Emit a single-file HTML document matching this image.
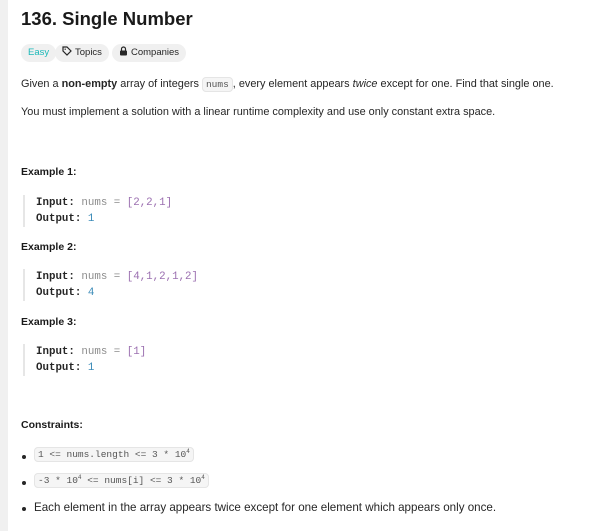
<!DOCTYPE html>
<html><head><style>
body{margin:0;width:614px;height:531px;background:#fff;font-family:"Liberation Sans",sans-serif;color:#262626;position:relative;overflow:hidden}
.strip{position:absolute;left:0;top:0;width:8px;height:531px;background:#f0f0f0}
.a{position:absolute;white-space:nowrap}
h1{position:absolute;left:21px;top:8px;margin:0;font-size:18.5px;font-weight:bold;color:#1a1a1a}
.badge{position:absolute;top:44px;height:18px;border-radius:9px;background:#f0f0f0;font-size:9.5px;line-height:18px;padding:0 7px;color:#262626}
p{margin:0}
.t{font-size:10.9px}
code{font-family:"Liberation Mono",monospace;font-size:9.5px;background:#f5f5f5;border:1px solid #e5e5e5;border-radius:4px;padding:1px 3px;color:#555;letter-spacing:0}
.h{font-size:10.5px;font-weight:bold;color:#1a1a1a}
.pre{position:absolute;left:23px;border-left:2px solid #e6e6e6;padding-left:11px;font-family:"Liberation Mono",monospace;font-size:10.8px;line-height:16px;color:#262626}
.g{color:#8c8c8c}.p{color:#9b6fb0}.bl{color:#3b8bb8}
.dot{position:absolute;left:22px;width:4px;height:4px;border-radius:50%;background:#262626}
</style></head><body>
<div class="strip"></div>
<h1>136. Single Number</h1>
<div class="badge" style="left:21px;color:#1cb8b8">Easy</div>
<div class="badge" style="left:55px"><svg width="10" height="10" viewBox="0 0 10 10" style="vertical-align:-1px;margin-right:3px"><path d="M1 1h4l4 4-4 4-4-4z" fill="none" stroke="#262626" stroke-width="1.2"/><circle cx="3.2" cy="3.2" r=".7" fill="#262626"/></svg>Topics</div>
<div class="badge" style="left:112px"><svg width="9" height="10" viewBox="0 0 9 10" style="vertical-align:-1px;margin-right:3px"><path d="M2.5 4.5V3a2 2 0 0 1 4 0v1.5" fill="none" stroke="#262626" stroke-width="1.2"/><rect x="1" y="4.5" width="7" height="5" rx="1" fill="#262626"/></svg>Companies</div>
<p class="a t" style="left:21px;top:78px">Given a <b>non-empty</b> array of integers <code>nums</code>, every element appears <i>twice</i> except for one. Find that single one.</p>
<p class="a t" style="left:21px;top:106px">You must implement a solution with a linear runtime complexity and use only constant extra space.</p>
<p class="a h" style="left:21px;top:166px">Example 1:</p>
<div class="pre" style="top:195px"><b>Input:</b> <span class="g">nums = </span><span class="p">[2,2,1]</span><br><b>Output:</b> <span class="bl">1</span></div>
<p class="a h" style="left:21px;top:241px">Example 2:</p>
<div class="pre" style="top:269px"><b>Input:</b> <span class="g">nums = </span><span class="p">[4,1,2,1,2]</span><br><b>Output:</b> <span class="bl">4</span></div>
<p class="a h" style="left:21px;top:316px">Example 3:</p>
<div class="pre" style="top:344px"><b>Input:</b> <span class="g">nums = </span><span class="p">[1]</span><br><b>Output:</b> <span class="bl">1</span></div>
<p class="a h" style="left:21px;top:419px">Constraints:</p>
<div class="dot" style="top:455px"></div>
<p class="a t" style="left:34px;top:448px"><code>1 &lt;= nums.length &lt;= 3 * 10<sup style="font-size:6px">4</sup></code></p>
<div class="dot" style="top:481px"></div>
<p class="a t" style="left:34px;top:474px"><code>-3 * 10<sup style="font-size:6px">4</sup> &lt;= nums[i] &lt;= 3 * 10<sup style="font-size:6px">4</sup></code></p>
<div class="dot" style="top:507px"></div>
<p class="a t" style="left:34px;top:501px;font-size:11.6px">Each element in the array appears twice except for one element which appears only once.</p>
</body></html>
